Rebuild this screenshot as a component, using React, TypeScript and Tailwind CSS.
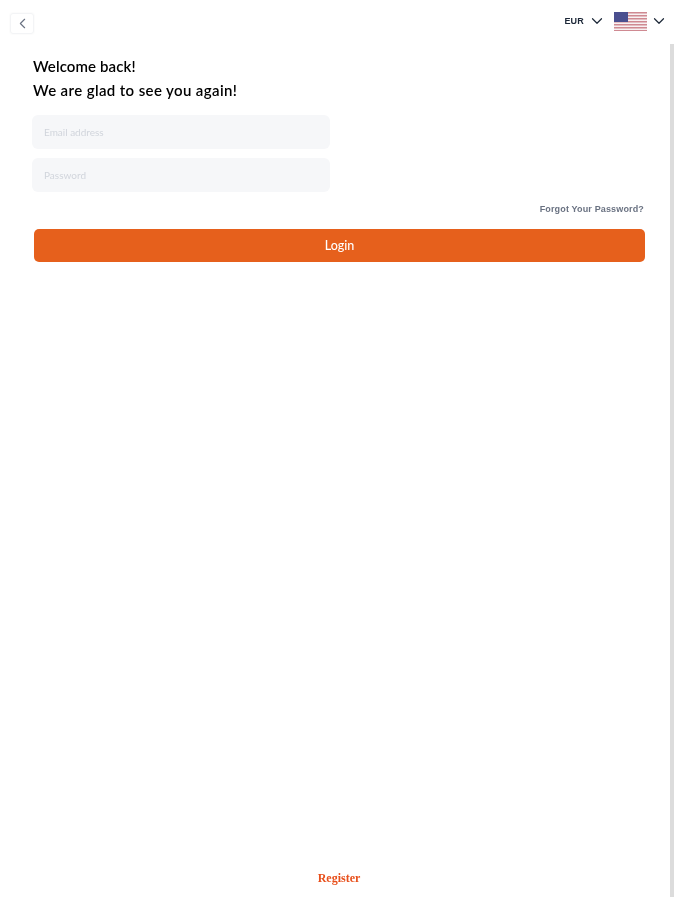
import React from 'react'
import { ChevronDown, ChevronLeft } from 'lucide-react'

function UsFlag() {
  const stripes = [0, 1, 2, 3, 4, 5, 6]
  return (
    <svg width="33" height="19" viewBox="0 0 33 19" className="block">
      <rect width="33" height="19" fill="#f7f1f2" />
      {stripes.map((i) => (
        <rect key={i} x="0" y={i * 3} width="33" height="1.5" fill="#cf8a92" />
      ))}
      <rect width="14" height="10" fill="#4a4f8f" />
    </svg>
  )
}

export default function App() {
  return (
    <div className="w-[675px] h-[900px] bg-white flex flex-col font-['Lato',sans-serif] overflow-hidden blur-[0.4px]">
      {/* Top bar */}
      <header className="h-[44px] shrink-0 flex items-start justify-between pl-[10px] pr-[8px]">
        <button className="mt-[13px] w-[24px] h-[21px] flex items-center justify-center rounded-[3px] border border-gray-100 shadow-[0_0_2px_rgba(0,0,0,0.06)] text-gray-500">
          <ChevronLeft className="w-[17px] h-[17px]" strokeWidth={1.6} />
        </button>
        <div className="flex items-start mt-[12px]">
          <span className="mt-[3px] text-[9px] font-bold tracking-[0.2px] text-gray-800 font-['Liberation_Sans',sans-serif]">EUR</span>
          <ChevronDown className="ml-[4px] mt-0 w-[18px] h-[18px] text-gray-800" strokeWidth={1.6} />
          <div className="ml-[8px]">
            <UsFlag />
          </div>
          <ChevronDown className="ml-[3px] -mr-px mt-0 w-[18px] h-[18px] text-gray-800" strokeWidth={1.6} />
        </div>
      </header>

      <div className="flex-1 flex min-h-0 pb-[3px]">
        <main className="flex-1 flex flex-col pl-[33px] pr-[25px]">
          <h1 className="mt-[10px] text-[15px] leading-[24px] font-semibold text-black tracking-[0.1px]">Welcome back!</h1>
          <h2 className="text-[15px] leading-[24px] font-semibold text-black tracking-[0.38px]">We are glad to see you again!</h2>

          <input
            placeholder="Email address"
            className="mt-[13px] w-[298px] h-[34px] -ml-px rounded-[6px] bg-[#f6f7f9] px-[12px] text-[10px] placeholder:text-gray-300 outline-none"
          />
          <input
            placeholder="Password"
            className="mt-[9px] w-[298px] h-[34px] -ml-px rounded-[6px] bg-[#f6f7f9] px-[12px] text-[10px] placeholder:text-gray-300 outline-none"
          />

          <a className="mt-[11px] mr-px self-end text-[9px] leading-[13px] font-bold tracking-[0.15px] text-gray-500 font-['Liberation_Sans',sans-serif]">
            Forgot Your Password?
          </a>

          <button className="mt-[13px] ml-px h-[33px] pt-[2px] rounded-[5px] bg-[#e6601c] text-white text-[12.5px] font-medium">
            Login
          </button>

          <div className="mt-auto mb-[9px] text-center">
            <a className="text-[12px] leading-[14px] font-bold text-[#e8501c] font-['Liberation_Serif',serif]">Register</a>
          </div>
        </main>
        <div className="w-[4px] mr-px shrink-0 bg-[#dcdcdc]" />
      </div>
    </div>
  )
}
